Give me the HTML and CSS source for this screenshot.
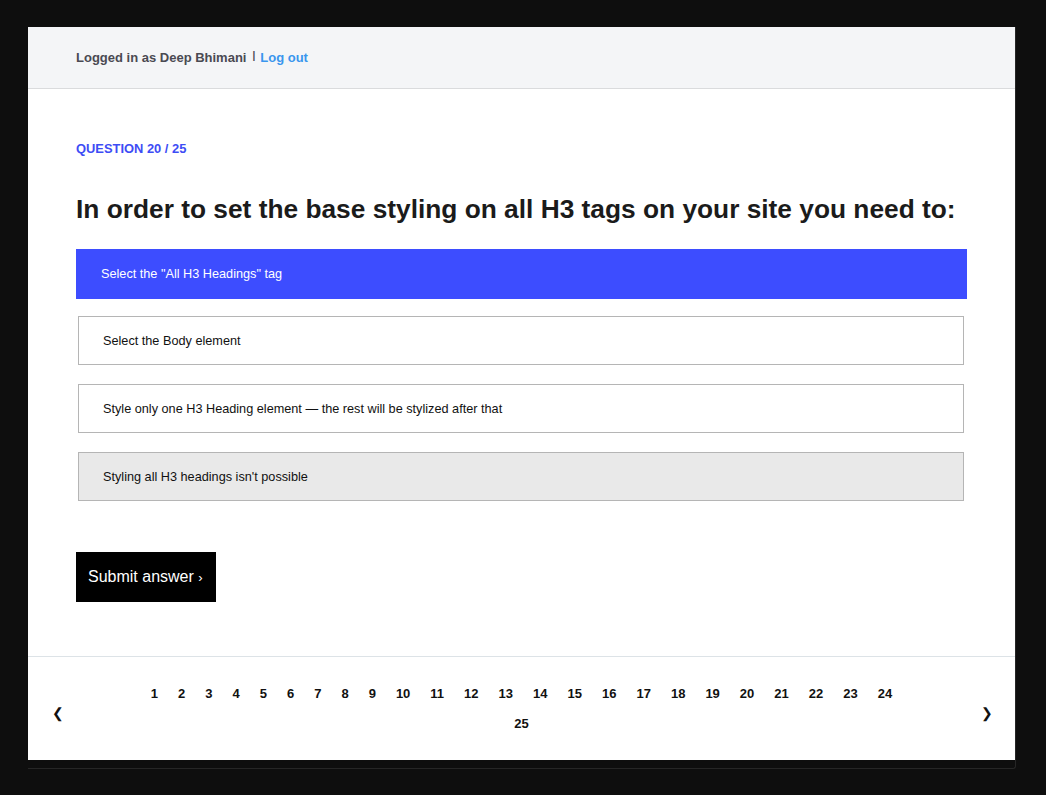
FILE: index.html
```html
<!DOCTYPE html>
<html>
<head>
<meta charset="utf-8">
<link rel="stylesheet" href="styles.css">
</head>
<body>
<div class="frame">
  <div class="card">
    <header class="topbar">
      <span class="user">Logged in as Deep Bhimani</span>
      <span class="sep">|</span>
      <a class="logout" href="#">Log out</a>
    </header>
    <main class="quiz">
      <div class="qnum">Question 20 / 25</div>
      <h1 class="qtitle">In order to set the base styling on all H3 tags on your site you need to:</h1>
      <ul class="options">
        <li class="opt selected">Select the "All H3 Headings" tag</li>
        <li class="opt">Select the Body element</li>
        <li class="opt">Style only one H3 Heading element — the rest will be stylized after that</li>
        <li class="opt hover">Styling all H3 headings isn't possible</li>
      </ul>
      <button class="submit">Submit answer <span class="chev">›</span></button>
    </main>
    <footer class="pager">
      <span class="arrow">&#10094;</span>
      <ul class="pages">
        <li>1</li><li>2</li><li>3</li><li>4</li><li>5</li><li>6</li><li>7</li><li>8</li><li>9</li><li>10</li><li>11</li><li>12</li><li>13</li><li>14</li><li>15</li><li>16</li><li>17</li><li>18</li><li>19</li><li>20</li><li>21</li><li>22</li><li>23</li><li>24</li><li>25</li>
      </ul>
      <span class="arrow">&#10095;</span>
    </footer>
  </div>
</div>
</body>
</html>
```

FILE: styles.css
```css
* { box-sizing: border-box; }
html, body { margin: 0; padding: 0; }
body {
  background: #0e0e0e;
  font-family: "Liberation Sans", Arial, sans-serif;
  width: 1046px;
  height: 795px;
  overflow: hidden;
}
.frame {
  margin: 27px 0 0 28px;
  width: 988px;
  height: 742px;
  border: 1px solid #262626;
  border-top: none;
  border-left: none;
  border-radius: 0 0 3px 0;
}
.card {
  background: #fff;
  width: 987px;
}
.topbar {
  height: 62px;
  background: #f4f5f7;
  border-bottom: 1px solid #dadbdd;
  display: flex;
  align-items: center;
  padding: 0 48px;
  font-size: 13px;
  font-weight: bold;
}
.user { color: #4a4a52; }
.sep {
  color: #4a4a52;
  font-size: 10px;
  margin: 0 5px 0 6px;
  position: relative;
  top: -2px;
}
.logout { color: #3a96ee; text-decoration: none; }
.quiz {
  padding: 53px 48px 54px;
}
.qnum {
  color: #3d4cf5;
  font-size: 12.9px;
  font-weight: bold;
  text-transform: uppercase;
  line-height: 14px;
}
.qtitle {
  margin: 36px 0 0;
  font-size: 26.3px;
  line-height: 34px;
  color: #1b1b1b;
  font-weight: bold;
}
.options {
  list-style: none;
  margin: 23px 0 0;
  padding: 0;
  display: flex;
  flex-direction: column;
  gap: 17px;
}
.opt {
  margin: 0 3px 0 2px;
  height: 49px;
  border: 1px solid #b5b5b5;
  display: flex;
  align-items: center;
  padding: 0 24px;
  font-size: 12.7px;
  color: #111;
}
.opt:not(.selected) + .opt { margin-top: 2px; }
.opt.selected {
  margin: 0;
  height: 50px;
  background: #3d4dff;
  border-color: #3d4dff;
  color: #fff;
}
.opt.hover { background: #e9e9e9; }
.submit {
  margin-top: 51px;
  height: 50px;
  width: 140px;
  padding: 0 12px;
  text-align: left;
  background: #000;
  color: #fff;
  border: none;
  font-family: "Liberation Sans", Arial, sans-serif;
  font-size: 16px;
}
.chev { font-size: 13px; }
.pager {
  border-top: 1px solid #dde3e7;
  height: 104px;
  display: flex;
  align-items: center;
  justify-content: space-between;
  padding: 0 24px;
}
.arrow {
  font-size: 14px;
  color: #111;
  width: 10px;
  text-align: center;
  position: relative;
  top: 4px;
}
.pages {
  list-style: none;
  margin: 0;
  padding: 0;
  width: 780px;
  display: flex;
  flex-wrap: wrap;
  justify-content: center;
}
.pages li {
  padding: 0 10px;
  font-size: 13px;
  font-weight: bold;
  line-height: 30px;
  color: #111;
}
```
